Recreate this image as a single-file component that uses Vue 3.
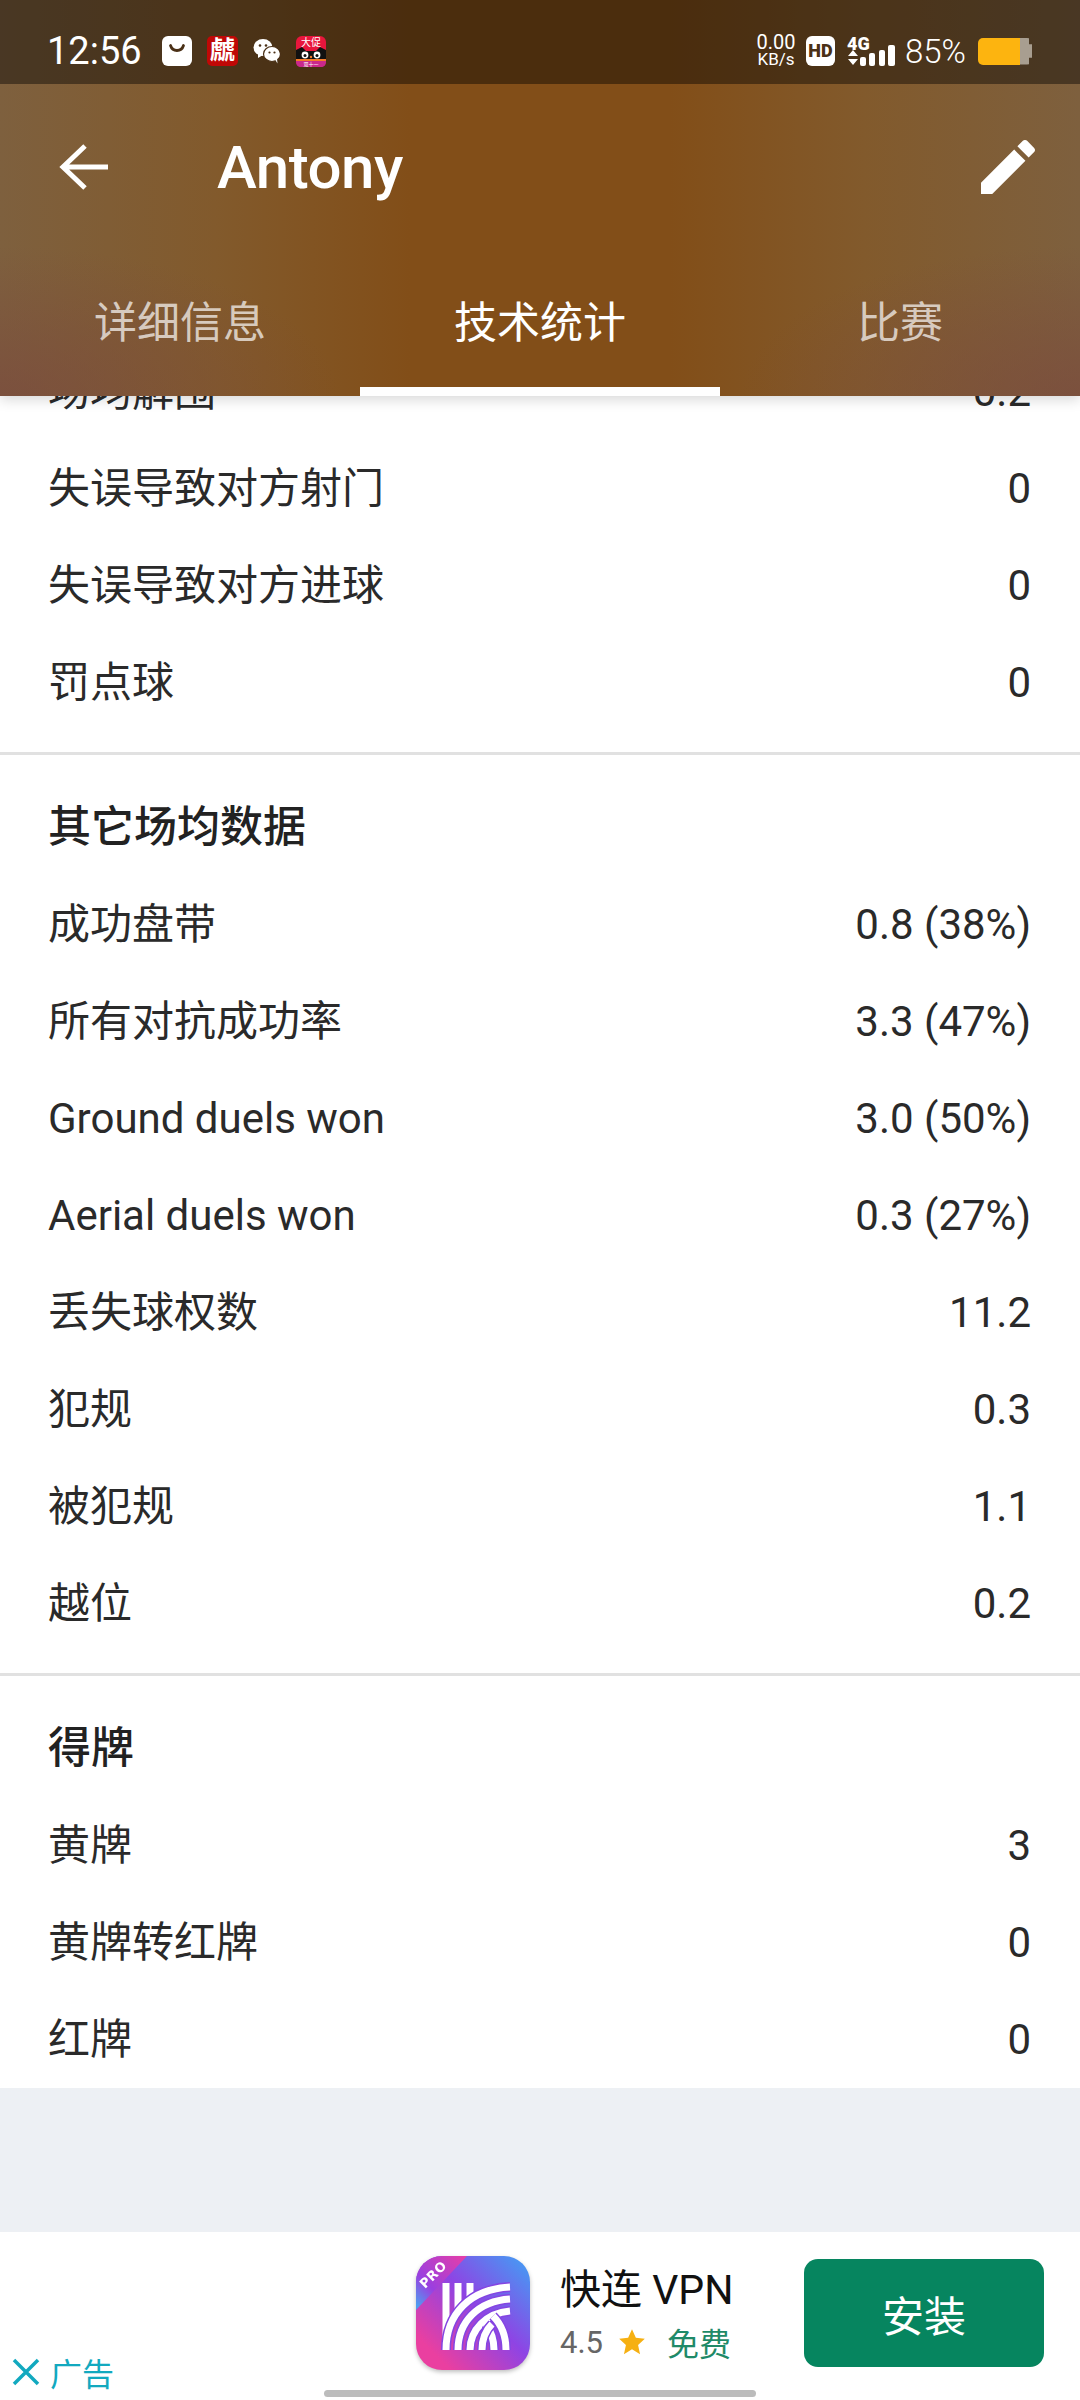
<script setup>
const sections = [
  {
    rows: [
      ['场均解围', '0.2'],
      ['失误导致对方射门', '0'],
      ['失误导致对方进球', '0'],
      ['罚点球', '0']
    ]
  },
  {
    title: '其它场均数据',
    rows: [
      ['成功盘带', '0.8 (38%)'],
      ['所有对抗成功率', '3.3 (47%)'],
      ['Ground duels won', '3.0 (50%)'],
      ['Aerial duels won', '0.3 (27%)'],
      ['丢失球权数', '11.2'],
      ['犯规', '0.3'],
      ['被犯规', '1.1'],
      ['越位', '0.2']
    ]
  },
  {
    title: '得牌',
    rows: [
      ['黄牌', '3'],
      ['黄牌转红牌', '0'],
      ['红牌', '0']
    ]
  }
]

const tabs = ['详细信息', '技术统计', '比赛']

const arcs = [
  'M30 94C30 58 54 33 94 31',
  'M42 94C42 66 62 45 94 43',
  'M54 94C54 74 70 57 94 55',
  'M90 94C90 80 85 68 77 60',
  'M78 94C78 84 75 75 70 68',
  'M66 94C66 82 70 74 76 68'
]
</script>

<template>
  <div class="page">
    <header class="top">
      <div class="status">
        <span class="time">12:56</span>
        <div class="notify">
          <svg width="30" height="30" viewBox="0 0 30 30">
            <rect width="30" height="30" rx="6" fill="#fff" />
            <path d="M8.500 9.500c1.200 3.800 3.500 5 6.500 5s5.300-1.200 6.500-5" fill="none" stroke="#4a3016" stroke-width="2.800" stroke-linecap="round" />
          </svg>
          <div class="red-app">虤</div>
          <svg width="28" height="26" viewBox="0 0 28 26">
            <ellipse cx="10" cy="9.500" rx="9.500" ry="8.500" fill="#fff" />
            <path d="M5 15l0 5 5-3z" fill="#fff" />
            <circle cx="7" cy="7.500" r="1.300" fill="#4a3016" />
            <circle cx="13" cy="7.500" r="1.300" fill="#4a3016" />
            <ellipse cx="19" cy="16" rx="8.500" ry="7.500" fill="#fff" stroke="#4a3016" stroke-width="1.200" />
            <path d="M22 21.500l2.500 4-0.500-5z" fill="#fff" />
            <circle cx="16.500" cy="14.500" r="1.100" fill="#4a3016" />
            <circle cx="21.500" cy="14.500" r="1.100" fill="#4a3016" />
          </svg>
          <svg width="30" height="31" viewBox="0 0 30 31">
            <rect width="30" height="31" rx="6" fill="#e8163c" />
            <path d="M0 25V14l6-3 4 4h10l4-4 6 3v11z" fill="#111" />
            <path d="M0 25h30v1c0 3-2 5-5 5H5c-3 0-5-2-5-5z" fill="#c9288c" />
            <rect y="23" width="30" height="2" fill="#f47a2a" />
            <circle cx="9" cy="19" r="3.400" fill="#fff" />
            <circle cx="21" cy="19" r="3.400" fill="#fff" />
            <circle cx="9" cy="19.500" r="1.500" fill="#111" />
            <circle cx="21" cy="19.500" r="1.500" fill="#111" />
            <circle cx="15" cy="21" r="1.200" fill="#f47a2a" />
            <text x="15" y="10" class="tiny big">大促</text>
            <text x="15" y="30" class="tiny">双十一</text>
          </svg>
        </div>
        <div class="sys">
          <div class="speed"><span>0.00</span><span class="unit">KB/s</span></div>
          <div class="hd">HD</div>
          <div class="net">
            <span class="four-g">4G</span>
            <svg width="48" height="30" viewBox="0 0 48 30">
              <path d="M1 20l5-6 5 6zM1 23l5 6 5-6z" fill="#fff" />
              <rect x="13" y="21" width="6" height="9" rx="2" fill="#fff" />
              <rect x="22" y="17" width="6" height="13" rx="2" fill="#fff" />
              <rect x="32" y="14" width="6" height="16" rx="2" fill="#fff" />
              <rect x="41" y="9" width="7" height="21" rx="2" fill="#fff" />
            </svg>
          </div>
          <span class="pct">85%</span>
          <div class="battery"><div class="level"></div><div class="nub"></div></div>
        </div>
      </div>

      <div class="bar">
        <svg class="back" width="54" height="48" viewBox="0 0 54 48">
          <path d="M51 24H6M28 3L6 24l22 21" fill="none" stroke="#fff" stroke-width="5" />
        </svg>
        <h1>Antony</h1>
        <svg class="edit" width="54" height="54" viewBox="3 3 18 18">
          <path d="M3 17.250V21h3.750L17.810 9.940l-3.750-3.750L3 17.250zM20.710 7.040c.39-.39.39-1.020 0-1.410l-2.340-2.340c-.39-.39-1.020-.39-1.410 0l-1.830 1.830 3.750 3.750 1.830-1.830z" fill="#fff" />
        </svg>
      </div>

      <nav class="tabs">
        <div v-for="(tab, i) in tabs" :key="tab" class="tab" :class="{ active: i === 1 }">
          {{ tab }}
        </div>
      </nav>
    </header>

    <main class="stats">
      <div class="stats-inner">
        <section v-for="(section, i) in sections" :key="i" class="section">
          <h2 v-if="section.title">{{ section.title }}</h2>
          <div v-for="row in section.rows" :key="row[0]" class="row">
            <span>{{ row[0] }}</span>
            <span>{{ row[1] }}</span>
          </div>
        </section>
      </div>
    </main>

    <footer class="ad">
      <svg class="app-icon" width="114" height="114" viewBox="0 0 114 114">
        <defs>
          <linearGradient id="iconBg" x1="0" y1="1" x2="1" y2="0">
            <stop offset="0.150" stop-color="#ea3fa0" />
            <stop offset="0.550" stop-color="#8e44e4" />
            <stop offset="1" stop-color="#3fa2f5" />
          </linearGradient>
          <linearGradient id="ribbon" x1="0" y1="1" x2="1" y2="0">
            <stop offset="0.050" stop-color="#4f9df0" />
            <stop offset="0.350" stop-color="#9a3fe0" />
            <stop offset="1" stop-color="#e83ea6" />
          </linearGradient>
          <clipPath id="iconClip"><rect width="114" height="114" rx="26" /></clipPath>
        </defs>
        <g clip-path="url(#iconClip)">
          <rect width="114" height="114" fill="url(#iconBg)" />
          <path d="M0 0H51L0 54z" fill="url(#ribbon)" />
          <text class="pro" transform="translate(9 33) rotate(-45)">PRO</text>
          <g fill="none" stroke="#fff" stroke-width="7">
            <path d="M30 94V27M42 56V27M54 42V27" />
          </g>
          <g v-for="arc in arcs" :key="arc" fill="none">
            <path :d="arc" stroke="#8446e2" stroke-width="10" />
            <path :d="arc" stroke="#fff" stroke-width="7" />
          </g>
        </g>
      </svg>
      <div class="app-info">
        <div class="app-name">快连 VPN</div>
        <div class="app-meta">
          <span class="rating">4.5</span>
          <svg width="28" height="28" viewBox="0 0 24 24">
            <path d="M12 1l3.300 7.400 7.700.8-5.800 5.300 1.700 7.900L12 18.300 5.100 22.400l1.700-7.900L1 9.200l7.700-.8z" fill="#f6b012" />
          </svg>
          <span class="free">免费</span>
        </div>
      </div>
      <button class="install">安装</button>

      <div class="ad-tag">
        <svg width="28" height="28" viewBox="0 0 28 28">
          <path d="M2 2l24 24M26 2L2 26" stroke="#12a9bf" stroke-width="3.500" fill="none" />
        </svg>
        <span>广告</span>
      </div>
      <div class="home"></div>
    </footer>
  </div>
</template>

<style>
html, body {
  margin: 0;
  background: #fff;
}
</style>

<style scoped>
.page {
  width: 1080px;
  height: 2400px;
  display: flex;
  flex-direction: column;
  overflow: hidden;
  background: #edf0f4;
  font-family: Roboto, "Noto Sans CJK SC", sans-serif;
  color: #222;
  position: relative;
}

.top {
  height: 396px;
  flex: none;
  color: #fff;
  position: relative;
  z-index: 1;
  background:
    radial-gradient(340px 150px at 0 100%, rgba(122, 72, 62, 0.65), rgba(122, 72, 62, 0)),
    radial-gradient(340px 150px at 100% 100%, rgba(122, 72, 62, 0.65), rgba(122, 72, 62, 0)),
    linear-gradient(to right, #7e603e 0%, #825a2c 20%, #824e18 38%, #824e18 62%, #825a2c 80%, #7e603e 100%);
  box-shadow: 0 4px 12px rgba(0, 0, 0, 0.15);
}

.status {
  height: 84px;
  box-sizing: border-box;
  padding: 18px 48px 0 47px;
  display: flex;
  align-items: center;
  background: rgba(0, 0, 0, 0.42);
}

.time {
  font-size: 38px;
  width: 115px;
}

.notify {
  display: flex;
  align-items: center;
  gap: 15px;
}

.red-app {
  width: 31px;
  height: 30px;
  border-radius: 5px;
  background: #c00806;
  font-size: 25px;
  font-weight: 700;
  line-height: 30px;
  text-align: center;
}

.tiny {
  font-size: 5px;
  fill: #fff;
  text-anchor: middle;
}

.tiny.big {
  font-size: 10px;
}

.sys {
  margin-left: auto;
  display: flex;
  align-items: center;
}

.speed {
  display: flex;
  flex-direction: column;
  align-items: center;
  font-size: 20px;
  line-height: 17px;
  width: 38px;
}

.unit {
  font-size: 17px;
}

.hd {
  width: 29px;
  height: 30px;
  margin-left: 11px;
  border-radius: 6px;
  background: #fff;
  color: #4a3016;
  font-size: 18px;
  font-weight: 900;
  line-height: 30px;
  text-align: center;
}

.net {
  position: relative;
  width: 48px;
  height: 30px;
  margin-left: 12px;
}

.net svg {
  display: block;
}

.four-g {
  position: absolute;
  left: 0;
  top: -1px;
  font-size: 18px;
  font-weight: 900;
  line-height: 18px;
}

.pct {
  font-size: 33px;
  font-weight: 300;
  margin-left: 10px;
  width: 62px;
}

.battery {
  margin-left: 11px;
  width: 54px;
  height: 27px;
  display: flex;
  align-items: center;
}

.level {
  width: 42px;
  height: 27px;
  background: #fdb40f;
  border-radius: 5px 0 0 5px;
}

.nub {
  width: 12px;
  height: 27px;
  background: #a89e90;
  border-radius: 0 5px 5px 0;
  clip-path: polygon(0 0, 75% 0, 75% 25%, 100% 25%, 100% 75%, 75% 75%, 75% 100%, 0 100%);
}

.bar {
  height: 166px;
  display: flex;
  align-items: center;
  position: relative;
}

.back {
  margin-left: 57px;
  flex: none;
}

h1 {
  margin: 0 0 0 106px;
  font-size: 60px;
  font-weight: 500;
  letter-spacing: -0.5px;
}

.edit {
  margin-left: auto;
  margin-right: 45px;
}

.tabs {
  position: absolute;
  left: 0;
  right: 0;
  bottom: 0;
  height: 122px;
  display: flex;
}

.tab {
  flex: 1;
  box-sizing: border-box;
  display: flex;
  align-items: center;
  justify-content: center;
  padding-bottom: 32px;
  font-size: 43px;
  color: rgba(255, 255, 255, 0.7);
  position: relative;
}

.tab.active {
  color: #fff;
}

.tab.active::after {
  content: "";
  position: absolute;
  left: 0;
  right: 0;
  bottom: 0;
  height: 9px;
  background: #fff;
}

.stats {
  flex: none;
  overflow: hidden;
  background: #fff;
}

.stats-inner {
  margin-top: -53px;
}

.section {
  padding: 0 48px 21px;
  border-bottom: 3px solid #e1e1e1;
}

.section:last-child {
  padding-bottom: 0;
  border-bottom: none;
}

h2 {
  margin: 0;
  padding-top: 24px;
  font-size: 43px;
  line-height: 97px;
  font-weight: 500;
}

.row {
  display: flex;
  justify-content: space-between;
  font-size: 42px;
  line-height: 97px;
  color: #2a2a2a;
}

.row span:last-child {
  margin-right: 1px;
}

.ad {
  position: absolute;
  left: 0;
  right: 0;
  bottom: 0;
  height: 168px;
  background: #fff;
  display: flex;
  align-items: flex-start;
}

.app-icon {
  margin: 24px 0 0 416px;
  flex: none;
  filter: drop-shadow(0 2px 2px rgba(0, 0, 0, 0.25));
}

.app-info {
  margin: 33px 0 0 30px;
  width: 235px;
}

.app-name {
  font-size: 41px;
  line-height: 50px;
  color: #111;
  white-space: nowrap;
}

.app-meta {
  margin-top: 4px;
  display: flex;
  align-items: center;
  font-size: 31px;
}

.rating {
  color: #666;
}

.app-meta svg {
  margin-left: 15px;
}

.free {
  margin-left: 21px;
  font-size: 32px;
  color: #1f8a68;
}

.install {
  position: absolute;
  left: 804px;
  top: 27px;
  width: 240px;
  height: 108px;
  border: none;
  border-radius: 14px;
  background: #06855f;
  color: #fff;
  font-family: inherit;
  font-size: 42px;
}

.ad-tag {
  position: absolute;
  left: 12px;
  bottom: 5px;
  display: flex;
  align-items: center;
  gap: 10px;
  font-size: 32px;
  color: #12a9bf;
}

.home {
  position: absolute;
  left: 324px;
  bottom: 3px;
  width: 432px;
  height: 7px;
  border-radius: 4px;
  background: #bcbcbc;
}

.pro {
  font-family: "DejaVu Sans", sans-serif;
  font-size: 13px;
  font-weight: 700;
  fill: #fff;
  letter-spacing: 0.5px;
}
</style>
